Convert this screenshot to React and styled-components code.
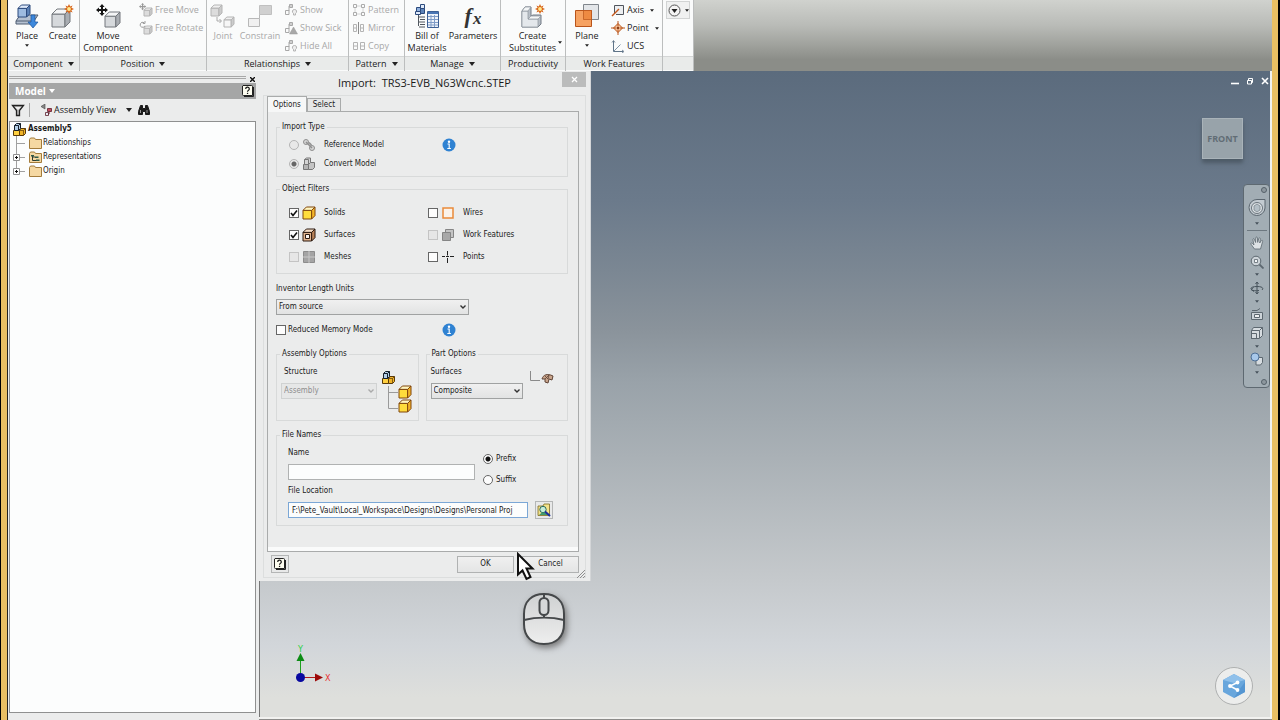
import { styled, createGlobalStyle } from "styled-components";

const GlobalStyle = createGlobalStyle`
  * {
    box-sizing: border-box;
  }
  body {
    margin: 0;
    overflow: hidden;
    background: #000;
    color: #1a1a1a;
    font-family: "DejaVu Sans Condensed", "DejaVu Sans", sans-serif;
    font-size: 8px;
    line-height: 12px;
  }
  button, input, select {
    font: inherit;
    color: inherit;
    margin: 0;
  }
  svg {
    display: block;
    flex-shrink: 0;
  }
`;

/* ---------- icons ---------- */

const Svg = ({ w = 16, h = w, box, children, ...rest }) => (
  <svg
    width={w}
    height={h}
    viewBox={box || `0 0 ${w} ${h}`}
    fill='none'
    aria-hidden='true'
    {...rest}
  >
    {children}
  </svg>
);

const Cube = ({ x = 0, y = 0, s = 14, front, top, side, line }) => {
  const d = s * 0.28;
  const f = s - d;
  return (
    <g stroke={line} strokeLinejoin='round' strokeWidth='1'>
      <path d={`M${x} ${y + d}h${f}v${f}h${-f}z`} fill={front} />
      <path d={`M${x} ${y + d}l${d} ${-d}h${f}l${-d} ${d}z`} fill={top} />
      <path d={`M${x + f} ${y + d}l${d} ${-d}v${f}l${-d} ${d}z`} fill={side} />
    </g>
  );
};

const yellow = { front: "#ffdc3c", top: "#fff6c0", side: "#f4b428", line: "#80460c" };
const grey = { front: "#d6d9dc", top: "#f4f5f6", side: "#a9adb2", line: "#73777c" };
const faint = { front: "#dcdcdc", top: "#f0f0f0", side: "#cccccc", line: "#b4b4b4" };
const blue = { front: "#9dbbe0", top: "#dfeafa", side: "#5d83b8", line: "#2c4a7c" };

const Burst = ({ x, y }) => (
  <g transform={`translate(${x} ${y})`}>
    <path
      d='M0-5L1.200-2.400 3.600-3.600 2.400-1.200 5 0 2.400 1.200 3.600 3.600 1.200 2.400 0 5-1.200 2.400-3.600 3.600-2.400 1.200-5 0-2.400-1.200-3.600-3.600-1.200-2.400z'
      fill='#d9661a'
    />
    <circle r='1.900' fill='#ffe98c' />
  </g>
);

const PlaceIcon = () => (
  <Svg w={26} h={26}>
    <path d='M2 18l4-6h18l-4 6v3H2z' fill='#b4c0d0' stroke='#4e5c70' />
    <path d='M2 18h15' stroke='#4e5c70' />
    <Cube x={4} y={2} s={12} {...blue} />
    <path d='M17 12h4v7h3l-5 6-5-6h3z' fill='#3d88dc' stroke='#1d559c' strokeWidth='.7' />
  </Svg>
);

const CreateIcon = () => (
  <Svg w={26} h={26}>
    <Cube x={2} y={6} s={18} {...grey} />
    <Burst x={19} y={6} />
  </Svg>
);

const MoveCross = ({ color = "#161616" }) => (
  <path
    d='M6 0l2.600 3H7v2h2V3.400L12 6 9 8.600V7H7v2h1.600L6 12 3.400 9H5V7H3v1.600L0 6l3-2.600V5h2V3H3.400z'
    fill={color}
  />
);

const MoveIcon = () => (
  <Svg w={26} h={26}>
    <Cube x={10} y={9} s={15} {...grey} />
    <g transform='translate(1 1)'>
      <MoveCross />
    </g>
  </Svg>
);

const FreeMoveIcon = () => (
  <Svg w={14}>
    <Cube x={5} y={5} s={8} {...faint} />
    <g transform='translate(0 0) scale(.6)'>
      <MoveCross color='#999' />
    </g>
  </Svg>
);

const FreeRotateIcon = () => (
  <Svg w={14}>
    <Cube x={5} y={5} s={8} {...faint} />
    <path d='M5 1.700a2.500 2.500 0 1 0 1 3M6 0v2.400H3.800' stroke='#999' />
  </Svg>
);

const JointIcon = () => (
  <Svg w={26} h={26}>
    <Cube x={1} y={2} s={11} {...faint} />
    <Cube x={14} y={14} s={10} {...faint} front='#f6f6f6' />
    <path d='M7 14v4h4M9.500 16l2 2-2 2' stroke='#aaa' />
  </Svg>
);

const ConstrainIcon = () => (
  <Svg w={26} h={26}>
    <path d='M12.500 2.500h12v9h-12z' fill='#d0d0d0' stroke='#c0c0c0' />
    <path d='M1.500 15.500h11v8h-11z' fill='#f0f0f0' stroke='#b8b8b8' />
    <path d='M12.500 11.500v4' stroke='#b8b8b8' />
  </Svg>
);

const RelIcon = ({ warn }) => (
  <Svg w={14}>
    <path d='M1.500 7.500h3.500v4H1.500zM5 8V3h3' stroke='#a8a8a8' />
    <path d='M5.500 1.500h3v3h-3z' fill='#d0d0d0' stroke='#a8a8a8' />
    {warn ? (
      <path d='M9.500 6l4 7h-8z' fill='#a8a8a8' stroke='#999' strokeWidth='.5' />
    ) : (
      <path d='M10.500 6.500a2 2 0 0 1 1 3.800V12H9.500v-1.700a2 2 0 0 1 1-3.800z' fill='#eee' stroke='#b4b4b4' />
    )}
  </Svg>
);

const PatternIcon = () => (
  <Svg w={14}>
    <g stroke='#acacac'>
      <path d='M1.500 1.500h3v3h-3zM9.500 1.500h3v3h-3zM1.500 9.500h3v3h-3zM9.500 9.500h3v3h-3z' />
      <path d='M4.500 3h5M4.500 11h5M3 4.500v5M11 4.500v5' strokeDasharray='1 1' />
    </g>
  </Svg>
);

const MirrorIcon = () => (
  <Svg w={14}>
    <g stroke='#b4b4b4'>
      <path d='M1.500 3.500h3v7h-3zM8.500 3.500h3v7h-3zM1.500 7h3M8.500 7h3' />
      <path d='M6.500 1v12' stroke='#8c8c8c' />
    </g>
  </Svg>
);

const CopyIcon = () => (
  <Svg w={14}>
    <path d='M1.500 3.500h4v7h-4zM8.500 3.500h4v7h-4zM1.500 7h4M8.500 7h4' stroke='#b4b4b4' />
  </Svg>
);

const BomIcon = () => (
  <Svg w={26} h={26}>
    <g stroke='#2c4a7c'>
      <path d='M2.500 4.500h4v4h-4z' fill='#8fb0dd' />
      <path d='M6.500 1.500h4v4h-4z' fill='#dfeafa' />
      <path d='M6.500 5.500h4v5h-4z' fill='#5d83b8' />
      <path d='M1.500 8.500h5v3h-5z' fill='#dfeafa' />
    </g>
    <path d='M4.500 12v11M5 14h6M6 16.500h5M5 19h6M6 21.500h5M5 24h6' stroke='#50565e' />
    <path d='M13.500 8.500h11v16h-11z' fill='#eef3fa' stroke='#3c5f94' />
    <path d='M14 9h10v2H14z' fill='#4a76b5' />
    <path d='M14 13.500h10M14 16.500h10M14 19.500h10M14 22h10M17 12v12M20.500 12v12' stroke='#7f9cc8' />
  </Svg>
);

const SubstituteIcon = () => (
  <Svg w={26} h={26}>
    <path d='M2 8l3-4h6v9l2-1h8v9l-3 3H2z' fill='#b8bfc7' stroke='#737b85' />
    <path d='M2 8h6v8h10v8H2z' fill='#e4e8ec' stroke='#8b939c' strokeWidth='.7' />
    <path d='M2 8l3-4h6L8 8zM8 16l3-3h10l-3 3z' fill='#f4f6f7' stroke='#8b939c' strokeWidth='.7' />
    <Burst x={20} y={6} />
  </Svg>
);

const PlaneIcon = () => (
  <Svg w={26} h={26}>
    <path d='M9.500 1.500h15v15h-15z' fill='#e3e6e9' stroke='#80868c' />
    <path d='M1.500 7.500h16v16h-16z' fill='#f6a262' stroke='#b9541a' />
    <path d='M9.500 7.500h8v9h-8z' fill='#ee8a42' stroke='#b9541a' strokeWidth='.7' />
  </Svg>
);

const AxisIcon = () => (
  <Svg w={14}>
    <path d='M3.500 10V2.500h9v9H5' fill='#eceef0' stroke='#50555c' />
    <path d='M1 13L8 6' stroke='#c4581c' strokeWidth='1.500' />
  </Svg>
);

const PointIcon = () => (
  <Svg w={14}>
    <path d='M7 2.500L11.500 7 7 11.500 2.500 7z' fill='#f7c49c' stroke='#b9541a' />
    <path d='M7 0v5M7 9v5M0 7h5M9 7h5' stroke='#b9541a' />
    <path d='M7 5.300L8.700 7 7 8.700 5.300 7z' fill='#8c3a10' />
  </Svg>
);

const UcsIcon = () => (
  <Svg w={14}>
    <path d='M2.500 2v10.500H12' stroke='#5f7488' />
    <path d='M2.500 12.500l7-7' stroke='#7f93a6' />
    <path d='M1 3.500l1.500-2L4 3.500M11 11l2 1.500-2 1.500' stroke='#5f7488' strokeWidth='.8' />
  </Svg>
);

const RibbonMenuIcon = () => (
  <Svg w={13}>
    <circle cx='6.500' cy='6.500' r='5.500' fill='#f4f4f4' stroke='#555' />
    <path d='M3.500 5h6l-3 4z' fill='#222' />
  </Svg>
);

const Caret = ({ w = 6, color = "#222" }) => (
  <Svg w={w} h={w === 6 ? 4 : 3} box='0 0 6 4'>
    <path d='M0 0h6L3 4z' fill={color} />
  </Svg>
);

const HelpIcon = ({ size = 12 }) => (
  <Svg w={size} box='0 0 12 12'>
    <path d='M2 11.500h9.500V2' stroke='#222' />
    <path d='M1 .500h8.500a1 1 0 0 1 1 1V10.500H1.500a1 1 0 0 1-1-1V1z' fill='#fdfdf0' stroke='#222' />
    <path d='M3.700 4a1.800 1.800 0 1 1 2.600 1.500c-.6.3-.8.6-.8 1.200' stroke='#161616' strokeWidth='1.200' />
    <path d='M4.900 7.800h1.300v1.200H4.900z' fill='#161616' />
  </Svg>
);

const FilterIcon = () => (
  <Svg w={14}>
    <path d='M1.500 2.500h11L8.500 7.500v5h-3v-5z' fill='#b8b8b8' stroke='#222' strokeWidth='1.300' />
    <path d='M4 4h6L7 7z' fill='#f0f0f0' />
  </Svg>
);

const ViewIcon = () => (
  <Svg w={12}>
    <path d='M5 0L1 2.500 5 5z' fill='#888' stroke='#444' strokeWidth='.6' />
    <path d='M7.500 4.500h4v3h-4z' fill='#c44a5c' stroke='#5c1f2c' strokeWidth='.8' />
    <path d='M5.500 8.500h3v3h-3z' fill='#e8eaf0' stroke='#5c1f2c' strokeWidth='.8' />
    <path d='M9 7.500V10H8' stroke='#5c1f2c' />
  </Svg>
);

const FindIcon = () => (
  <Svg w={12}>
    <path d='M2.500 1.500h2v3h3v-3h2l2 6v3h-4v-3h-3v3h-4v-3z' fill='#1a1a1a' stroke='#1a1a1a' />
    <path d='M2.500 6v3M9 6v3' stroke='#ccc' strokeWidth='.7' />
  </Svg>
);

const AssemblyShape = () => (
  <>
    <path d='M.500 7.500h6v5h-6z' fill='#ffd040' stroke='#5a3a08' />
    <path d='M6.500 7.500l1.500-2h4.500v5l-2 2h-4z' fill='#f0b428' stroke='#5a3a08' />
    <path d='M6.500 7.500h4l2-2M10.500 7.500v5' stroke='#5a3a08' strokeWidth='.7' />
    <path d='M1.500 2.500l2-2h4v5l-2 2h-4z' fill='#b4cfe8' stroke='#16202c' />
    <path d='M1.500 2.500h4v5M5.500 2.500l2-2' stroke='#16202c' />
  </>
);

const AssemblyIcon = () => (
  <Svg w={13}>
    <AssemblyShape />
  </Svg>
);

const FolderIcon = ({ rep }) => (
  <Svg w={13} h={12}>
    <path d='M.500 2.500l1-1.500h4l1 1.500h6v9H.500z' fill='#f5d8a2' stroke='#a37c3c' />
    {rep && (
      <>
        <path d='M3.500 4v5.500H7M3.500 6H6' stroke='#2e3a30' />
        <path d='M2 4h3v1.500H2zM6 5.500h3.500V7H6zM7 8.500h3.500V10H7z' fill='#2f5a48' />
      </>
    )}
  </Svg>
);

const InfoIcon = () => (
  <Svg w={14}>
    <circle cx='7' cy='7' r='6.500' fill='#2f82d2' />
    <circle cx='7' cy='3.700' r='1.200' fill='#fff' />
    <path d='M5.500 6h1.700v4.500M5.300 10.500h3.600' stroke='#fff' strokeWidth='1.100' />
  </Svg>
);

const LinkIcon = () => (
  <Svg w={14}>
    <g stroke='#8f8f8f'>
      <circle cx='4' cy='4' r='2.500' fill='#d4d4d4' />
      <circle cx='10' cy='10' r='2.500' fill='#d4d4d4' />
      <path d='M4 4l6 6M7 4.500L9.500 7' strokeWidth='1.500' />
    </g>
  </Svg>
);

const ConvertIcon = () => (
  <Svg w={14}>
    <g stroke='#777'>
      <path d='M1.500 7.500h5v5h-5z' fill='#b4b4b4' />
      <path d='M6.500 7.500l2-2h4v5l-2 2h-4z' fill='#c4c4c4' />
      <path d='M2.500 2.500l2-1.500h4v4.500l-2 2h-4z' fill='#d4d4d4' />
      <path d='M2.500 2.500h4v5' />
    </g>
  </Svg>
);

const SolidIcon = () => (
  <Svg w={14}>
    <Cube x={1} y={1} s={12} {...yellow} />
  </Svg>
);

const SurfaceIcon = () => (
  <Svg w={14}>
    <Cube x={1} y={1} s={12} front='#e2b48e' top='#f4dcc4' side='#b98258' line='#2c1a10' />
    <path d='M3.500 6.500h4v4h-4z' fill='#fbf4ee' stroke='#2c1a10' />
  </Svg>
);

const MeshIcon = () => (
  <Svg w={14}>
    <path d='M1.500 1.500h11v11h-11z' fill='#a4a4a4' stroke='#8c8c8c' />
    <path d='M7 1v12M1 7h12' stroke='#c8c8c8' />
  </Svg>
);

const WireIcon = () => (
  <Svg w={14}>
    <path d='M2 2h10v10H2z' stroke='#ea8a3a' strokeWidth='1.500' fill='#fbf3ea' />
  </Svg>
);

const WorkIcon = () => (
  <Svg w={14}>
    <path d='M4.500 1.500h8v8h-8z' fill='#c4c4c4' stroke='#858585' />
    <path d='M1.500 4.500h8v8h-8z' fill='#a8a8a8' stroke='#858585' />
  </Svg>
);

const PointsIcon = () => (
  <Svg w={14}>
    <path d='M6.500 1v4.500M6.500 8v5M1 6.500h3M9 6.500h4M5 6.500h3' stroke='#222' />
  </Svg>
);

const StructureIcon = () => (
  <Svg w={32} h={48}>
    <g transform='translate(1 5)'>
      <AssemblyShape />
    </g>
    <path d='M7.500 20v22.500H17M7.500 26.500H17' stroke='#9a9a9a' />
    <Cube x={18} y={20} s={12} {...yellow} />
    <Cube x={18} y={34} s={12} {...yellow} />
  </Svg>
);

const CompositeIcon = () => (
  <Svg w={24} h={20}>
    <path d='M.500 5v9.500H10' stroke='#8a8a8a' />
    <path d='M12 13c1-4 5-6 11-3l-1 4-3-1-1 4-3-1v-3z' fill='#c9a58c' stroke='#5f4436' />
    <path d='M15 10l3 3M19 9l-1 4M15 13l4-4' stroke='#5f4436' strokeWidth='.8' />
  </Svg>
);

const BrowseIcon = () => (
  <Svg w={14}>
    <path d='M1 3h5l1-2h5.500v11.500H1z' fill='#f3e28a' stroke='#7c6a20' strokeWidth='.8' />
    <circle cx='6' cy='6.500' r='3.200' fill='#c4ecd8' stroke='#2b6a5c' />
    <path d='M2 12l3-2.500h4l2 2.500z' fill='#3f9a6c' />
    <path d='M8 8.500l5 4.500' stroke='#1c2f9c' strokeWidth='2' />
  </Svg>
);

const Chevron = ({ color = "#333" }) => (
  <Svg w={8} h={6}>
    <path d='M1.500 1.500L4 4l2.500-2.500' stroke={color} strokeWidth='1.400' />
  </Svg>
);

const WheelIcon = () => (
  <Svg w={20}>
    <path d='M10 1.500h8v8.500a8 8 0 1 1-8-8.500z' fill='#c3cbd1' stroke='#5b666f' />
    <circle cx='10' cy='10' r='5.500' fill='#dfe4e7' stroke='#6b757d' />
    <path d='M7 8l3-2 3 2v4l-3 2-3-2z' fill='#b4bfc6' stroke='#7b858d' strokeWidth='.8' />
  </Svg>
);

const PanIcon = () => (
  <Svg w={14}>
    <path
      d='M4.500 13L1 8.200c-.6-1 .6-1.600 1.300-.9L4 9 2.900 3.700c-.2-1.100 1.200-1.400 1.500-.3L5.600 6.500 5.800 1.900c0-1.200 1.500-1.200 1.600 0l.3 4.500 1.100-3.900c.3-1.100 1.700-.8 1.500.3L9.700 7l1.600-2.300c.6-.9 1.800-.3 1.300.8L10.500 13z'
      fill='#dde2e5'
      stroke='#5d6870'
      strokeWidth='.8'
    />
  </Svg>
);

const ZoomIcon = () => (
  <Svg w={14}>
    <circle cx='6' cy='6' r='4.800' fill='#cdd4d9' stroke='#5d6870' />
    <path d='M4.500 4.500h3v3h-3z' fill='#f4f6f7' stroke='#5d6870' strokeWidth='.8' />
    <path d='M9.500 9.500l4 4' stroke='#5d6870' strokeWidth='1.800' />
  </Svg>
);

const OrbitIcon = () => (
  <Svg w={14}>
    <path d='M7 1v12M5.500 3L7 1l1.500 2M5.500 11L7 13l1.500-2' stroke='#46525b' />
    <path d='M12 9c2-2 0-3.500-5-3.500S0 7 1.500 8.500 6 10 9 9.500M3.500 6.500L1 8.500l3 2' stroke='#46525b' />
  </Svg>
);

const LookIcon = () => (
  <Svg w={14}>
    <path d='M1.500 5.500h11v7h-11z' fill='#cdd4d9' stroke='#5d6870' />
    <path d='M4.500 7.500h5v3h-5z' fill='#eef0f1' stroke='#5d6870' />
    <path d='M2 3.500h5l3-2' stroke='#5d6870' />
  </Svg>
);

const HomeCubeIcon = () => (
  <Svg w={14}>
    <path d='M1.500 4.500l2-3h9v8l-3 3h-8z' fill='#d6dce0' stroke='#5d6870' />
    <path d='M1.500 7.500h5v5h-5zM9.500 12V4.500h-8M9.500 4.500l3-3' stroke='#5d6870' />
  </Svg>
);

const StyleIcon = () => (
  <Svg w={14}>
    <path d='M6 5.500h6.500v5l-2 2.500H6z' fill='#d6dce0' stroke='#5d6870' />
    <circle cx='5' cy='5' r='4' fill='#a8c8ea' stroke='#4f7096' />
  </Svg>
);

/* ---------- data ---------- */

const panels = [
  {
    title: "Component",
    width: 72,
    arrow: true,
    tools: [
      { label: "Place", icon: <PlaceIcon />, width: 38, menu: true },
      { label: "Create", icon: <CreateIcon />, width: 33 },
    ],
  },
  {
    title: "Position",
    width: 127,
    arrow: true,
    tools: [{ label: "Move Component", icon: <MoveIcon />, width: 56 }],
    rows: [
      { label: "Free Move", icon: <FreeMoveIcon /> },
      { label: "Free Rotate", icon: <FreeRotateIcon /> },
    ],
    disabled: true,
  },
  {
    title: "Relationships",
    width: 142,
    arrow: true,
    tools: [
      { label: "Joint", icon: <JointIcon />, width: 32, disabled: true },
      { label: "Constrain", icon: <ConstrainIcon />, width: 42, disabled: true },
    ],
    rows: [
      { label: "Show", icon: <RelIcon /> },
      { label: "Show Sick", icon: <RelIcon warn /> },
      { label: "Hide All", icon: <RelIcon /> },
    ],
    disabled: true,
  },
  {
    title: "Pattern",
    width: 56,
    arrow: true,
    tools: [],
    rows: [
      { label: "Pattern", icon: <PatternIcon /> },
      { label: "Mirror", icon: <MirrorIcon /> },
      { label: "Copy", icon: <CopyIcon /> },
    ],
    disabled: true,
  },
  {
    title: "Manage",
    width: 96,
    arrow: true,
    tools: [
      { label: "Bill of Materials", icon: <BomIcon />, width: 44 },
      { label: "Parameters", fx: true, width: 48 },
    ],
  },
  {
    title: "Productivity",
    width: 65,
    tools: [
      { label: "Create Substitutes", icon: <SubstituteIcon />, width: 63, side: true },
    ],
  },
  {
    title: "Work Features",
    width: 97,
    tools: [{ label: "Plane", icon: <PlaneIcon />, width: 42, menu: true }],
    rows: [
      { label: "Axis", icon: <AxisIcon />, menu: true },
      { label: "Point", icon: <PointIcon />, menu: true },
      { label: "UCS", icon: <UcsIcon /> },
    ],
  },
];

const filters = [
  { label: "Solids", icon: <SolidIcon />, checked: true },
  { label: "Wires", icon: <WireIcon /> },
  { label: "Surfaces", icon: <SurfaceIcon />, checked: true },
  { label: "Work Features", icon: <WorkIcon />, disabled: true },
  { label: "Meshes", icon: <MeshIcon />, disabled: true },
  { label: "Points", icon: <PointsIcon /> },
];

/* ---------- parts ---------- */

const Ribbon = () => (
  <RibbonBar>
    {panels.map(({ title, width, arrow, tools, rows, disabled }) => (
      <Panel key={title} $width={width}>
        <PanelBody>
          {tools.map((tool) => (
            <Tool key={tool.label} $width={tool.width} disabled={tool.disabled}>
              {tool.fx ? (
                <Fx aria-hidden='true'>
                  <b>f</b>
                  <small>x</small>
                </Fx>
              ) : (
                tool.icon
              )}
              <span>{tool.label}</span>
              {tool.menu && <Caret w={4} />}
              {tool.side && (
                <SideCaret>
                  <Caret w={4} />
                </SideCaret>
              )}
            </Tool>
          ))}
          {rows && (
            <ToolRows>
              {rows.map((row) => (
                <ToolRow key={row.label} disabled={disabled}>
                  {row.icon}
                  <span>{row.label}</span>
                  {row.menu && <Caret w={4} />}
                </ToolRow>
              ))}
            </ToolRows>
          )}
        </PanelBody>
        <PanelTitle>
          {title}
          {arrow && <Caret />}
        </PanelTitle>
      </Panel>
    ))}
    <Panel $width={31}>
      <PanelBody>
        <RibbonMenu aria-label='Ribbon display'>
          <RibbonMenuIcon />
          <Caret w={4} />
        </RibbonMenu>
      </PanelBody>
      <PanelTitle />
    </Panel>
  </RibbonBar>
);

const Browser = () => (
  <Side>
    <Grip>
      <i />
      <CloseMark aria-label='Close browser'>
        <Svg w={5}>
          <path d='M0 0l5 5M5 0L0 5' stroke='#111' strokeWidth='1.400' />
        </Svg>
      </CloseMark>
    </Grip>
    <ModelBar>
      <strong>Model</strong>
      <Caret color='#fff' />
      <IconButton aria-label='Help'>
        <HelpIcon />
      </IconButton>
    </ModelBar>
    <SideTools>
      <IconButton aria-label='Filter'>
        <FilterIcon />
      </IconButton>
      <Divider />
      <ViewButton>
        <ViewIcon />
        <span>Assembly View</span>
        <Caret />
      </ViewButton>
      <IconButton aria-label='Find'>
        <FindIcon />
      </IconButton>
    </SideTools>
    <Tree>
      <TreeRoot>
        <AssemblyIcon />
        Assembly5
      </TreeRoot>
      <TreeItem>
        <Branch />
        <FolderIcon />
        Relationships
      </TreeItem>
      <TreeItem>
        <Branch plus />
        <FolderIcon rep />
        Representations
      </TreeItem>
      <TreeItem>
        <Branch plus last />
        <FolderIcon />
        Origin
      </TreeItem>
    </Tree>
  </Side>
);

const Branch = ({ plus, last }) => (
  <Svg w={15} h={14}>
    <path d={last ? "M3.500 0v7.500H12" : "M3.500 0v14M3.500 7.500H12"} stroke='#a0a0a0' />
    {plus && (
      <>
        <path d='M.500 4.500h6v6h-6z' fill='#fff' stroke='#909090' />
        <path d='M2 7.500h3M3.500 6v3' stroke='#111' />
      </>
    )}
  </Svg>
);

const Drop = ({ id, value, width, disabled }) => (
  <SelectBox $width={width} $disabled={disabled}>
    <select id={id} disabled={disabled} defaultValue={value}>
      <option>{value}</option>
    </select>
    <Chevron color={disabled ? "#aaa" : "#333"} />
  </SelectBox>
);

const ImportDialog = () => (
  <Dialog role='dialog' aria-labelledby='dialog-title'>
    <TitleBar>
      <h1 id='dialog-title'>Import:&nbsp; TRS3-EVB_N63Wcnc.STEP</h1>
      <CloseButton aria-label='Close'>
        <Svg w={7}>
          <path d='M1 1l5 5M6 1L1 6' stroke='#fff' strokeWidth='1.300' />
        </Svg>
      </CloseButton>
    </TitleBar>
    <Client>
      <Tabs role='tablist'>
        <Tab role='tab' aria-selected='true' $active>
          Options
        </Tab>
        <Tab role='tab' aria-selected='false'>
          Select
        </Tab>
      </Tabs>
      <Sheet>
        <Group>
          <legend>Import Type</legend>
          <TypeRows>
            <TypeRow>
              <Option>
                <Radio name='type' disabled />
                <LinkIcon />
                <OptionText>Reference Model</OptionText>
              </Option>
              <InfoIcon />
            </TypeRow>
            <TypeRow>
              <Option>
                <Radio name='type' disabled defaultChecked />
                <ConvertIcon />
                <OptionText>Convert Model</OptionText>
              </Option>
            </TypeRow>
          </TypeRows>
        </Group>

        <Group>
          <legend>Object Filters</legend>
          <FilterGrid>
            {filters.map(({ label, icon, checked, disabled }) => (
              <Option key={label}>
                <Check defaultChecked={checked} disabled={disabled} />
                {icon}
                <OptionText>{label}</OptionText>
              </Option>
            ))}
          </FilterGrid>
        </Group>

        <Units>
          <label htmlFor='units'>Inventor Length Units</label>
          <Drop id='units' value='From source' width={193} />
          <TypeRow $wide>
            <Option>
              <Check />
              <span>Reduced Memory Mode</span>
            </Option>
            <InfoIcon />
          </TypeRow>
        </Units>

        <Pair>
          <Group>
            <legend>Assembly Options</legend>
            <OptionPane>
              <Stack>
                <PaneLabel htmlFor='structure'>Structure</PaneLabel>
                <Drop id='structure' value='Assembly' width={96} disabled />
              </Stack>
              <StructureIcon />
            </OptionPane>
          </Group>
          <Group>
            <legend>Part Options</legend>
            <OptionPane $loose>
              <Stack>
                <label htmlFor='surfaces'>Surfaces</label>
                <Drop id='surfaces' value='Composite' width={92} />
              </Stack>
              <CompositeIcon />
            </OptionPane>
          </Group>
        </Pair>

        <Group>
          <legend>File Names</legend>
          <NamePane>
            <NameRow>
              <Stack>
                <label htmlFor='name'>Name</label>
                <TextBox id='name' />
                <label htmlFor='location'>File Location</label>
              </Stack>
              <Affixes>
                <Option>
                  <Radio name='affix' defaultChecked />
                  Prefix
                </Option>
                <Option>
                  <Radio name='affix' />
                  Suffix
                </Option>
              </Affixes>
            </NameRow>
            <LocationRow>
              <TextBox
                id='location'
                $focused
                defaultValue='F:\Pete_Vault\Local_Workspace\Designs\Designs\Personal Proj'
              />
              <SquareButton aria-label='Browse'>
                <BrowseIcon />
              </SquareButton>
            </LocationRow>
          </NamePane>
        </Group>
      </Sheet>
      <Footer>
        <SquareButton aria-label='Help'>
          <HelpIcon />
        </SquareButton>
        <Spacer />
        <PushButton>OK</PushButton>
        <PushButton>Cancel</PushButton>
      </Footer>
    </Client>
    <Resize>
      <Svg w={10}>
        <path d='M1 9l8-8M4 9l5-5M7 9l2-2' stroke='#8e8e8e' />
      </Svg>
    </Resize>
  </Dialog>
);

const Viewport = () => (
  <Canvas>
    <WindowButtons>
      <button aria-label='Minimize'>
        <Svg w={8}>
          <path d='M0 6.500h8' stroke='#fff' strokeWidth='1.600' />
        </Svg>
      </button>
      <button aria-label='Restore'>
        <Svg w={8}>
          <path d='M2.500 3V1.500h4v4H5.500M1.500 3.500h4v3.500h-4z' stroke='#fff' />
        </Svg>
      </button>
      <button aria-label='Close document'>
        <Svg w={8}>
          <path d='M1 1l6 6M7 1L1 7' stroke='#fff' strokeWidth='1.600' />
        </Svg>
      </button>
    </WindowButtons>
    <ViewCube>FRONT</ViewCube>
    <NavBar>
      <NavDot />
      <WheelIcon />
      <Caret w={4} color='#46525b' />
      <hr />
      <PanIcon />
      <ZoomIcon />
      <Caret w={4} color='#46525b' />
      <OrbitIcon />
      <Caret w={4} color='#46525b' />
      <LookIcon />
      <HomeCubeIcon />
      <Caret w={4} color='#46525b' />
      <StyleIcon />
      <Caret w={4} color='#46525b' />
      <NavDot />
    </NavBar>
    <Triad>
      <Svg w={44} h={48}>
        <path d='M8.500 38V21' stroke='#1ea01e' />
        <path d='M8.500 15l4 8h-8z' fill='#0c8c14' />
        <path d='M9 39.500h18' stroke='#b01818' />
        <path d='M23 35.500l8 4-8 4z' fill='#9c0808' />
        <circle cx='8.500' cy='39.500' r='4.500' fill='#0808a0' />
        <text x='6' y='14' fontSize='9' fill='#28d040'>Y</text>
        <text x='33' y='43' fontSize='9' fill='#e83030'>X</text>
      </Svg>
    </Triad>
    <ShareButton aria-label='Share'>
      <Svg w={24} h={26}>
        <path d='M12 1l11 6v12l-11 6-11-6V7z' fill='#68a6dc' />
        <path d='M12 1l11 6-11 3L1 7z' fill='#8fc0ea' />
        <path d='M12 25l11-6V9l-6 8z' fill='#5596d2' />
        <path d='M15.500 9.500L8 13l7.500 4' stroke='#fff' strokeWidth='1.500' />
        <circle cx='15.500' cy='9.500' r='1.900' fill='#fff' />
        <circle cx='8' cy='13' r='1.900' fill='#fff' />
        <circle cx='15.500' cy='17' r='1.900' fill='#fff' />
      </Svg>
    </ShareButton>
  </Canvas>
);

const App = () => (
  <Frame>
    <GlobalStyle />
    <Ribbon />
    <Workspace>
      <Browser />
      <Viewport />
      <ImportDialog />
      <MouseHint>
        <Svg w={50} h={60}>
          <defs>
            <linearGradient id='mouse' x1='0' y1='0' x2='0' y2='1'>
              <stop offset='0' stopColor='#cfd1d2' />
              <stop offset='1' stopColor='#eeeeee' />
            </linearGradient>
          </defs>
          <path
            d='M3 24C3 11 11 4 23 4s20 7 20 20v10c0 13-8 20-20 20S3 47 3 34z'
            fill='url(#mouse)'
            stroke='#45484a'
            strokeWidth='2'
          />
          <path d='M3 30c12-3 28-3 40 0' stroke='#45484a' strokeWidth='2' />
          <path d='M23 4v4M23 25v3' stroke='#45484a' strokeWidth='2' />
          <rect x='18.500' y='8' width='9' height='17' rx='4.500' stroke='#45484a' strokeWidth='2' fill='#d6d8d9' />
        </Svg>
      </MouseHint>
      <Cursor>
        <Svg w={20} h={30}>
          <path
            d='M2 2v20.500l4.500-4 4 8.500 4-2-4-8.500H16.500z'
            fill='#fff'
            stroke='#111'
            strokeWidth='2'
          />
        </Svg>
      </Cursor>
    </Workspace>
  </Frame>
);

/* ---------- styles ---------- */

const uiFont = `"Open Sans", "Noto Sans", sans-serif`;

const Frame = styled.div`
  height: 100vh;
  display: flex;
  flex-direction: column;
  border: solid #e9bf63;
  border-width: 0 6px;
  margin: 0 2px 0 1px;
  background: #ebecec;
`;

const RibbonBar = styled.header`
  display: flex;
  height: 71px;
  font-family: ${uiFont};
  font-size: 9px;
  border-left: 1px solid #222;
  background: linear-gradient(#d0d2ce, #b9bbb7 36%, #9fa19c 64%, #8b8d88 84%, #8b8d88);
`;

const Panel = styled.section`
  width: ${({ $width }) => $width}px;
  padding-bottom: 1px;
  display: flex;
  flex-direction: column;
  background: #fafbfb;
  border-right: 1px solid #bcbebe;
`;

const PanelBody = styled.div`
  flex: 1;
  display: flex;
  align-items: flex-start;
`;

const PanelTitle = styled.div`
  height: 14px;
  display: flex;
  align-items: center;
  justify-content: center;
  gap: 5px;
  background: #e9ebea;
  border-top: 1px solid #d4d6d6;
  white-space: nowrap;
`;

const Tool = styled.button`
  position: relative;
  width: ${({ $width }) => $width}px;
  padding: 3px 0 0;
  display: flex;
  flex-direction: column;
  align-items: center;
  border: 0;
  background: none;
  line-height: 12px;
  color: ${({ disabled }) => (disabled ? "#a8a8a8" : "#222")};
  > span {
    margin-top: 1px;
  }
  > span + svg {
    margin-top: 2px;
  }
`;

const SideCaret = styled.span`
  position: absolute;
  right: 2px;
  bottom: 10px;
`;

const Fx = styled.i`
  height: 26px;
  display: flex;
  align-items: flex-end;
  gap: 1px;
  font-family: "Liberation Serif", serif;
  color: #333;
  b {
    font-size: 22px;
    line-height: 26px;
  }
  small {
    font-size: 17px;
    font-weight: bold;
    line-height: 20px;
  }
`;

const ToolRows = styled.div`
  padding: 1px 0 0 1px;
`;

const ToolRow = styled.button`
  height: 18px;
  padding: 0 0 0 2px;
  display: flex;
  align-items: center;
  gap: 2px;
  border: 0;
  background: none;
  white-space: nowrap;
  color: ${({ disabled }) => (disabled ? "#a8a8a8" : "#222")};
  span + svg {
    margin-left: 4px;
  }
`;

const RibbonMenu = styled.button`
  margin: 1px 3px;
  width: 26px;
  height: 18px;
  padding: 0;
  display: flex;
  align-items: center;
  justify-content: center;
  gap: 4px;
  border: 1px solid #d2d4d4;
  background: #f0f1f1;
`;

const Workspace = styled.main`
  flex: 1;
  min-height: 0;
  display: flex;
  position: relative;
`;

const Side = styled.aside`
  width: 252px;
  padding: 4px 3px 7px 1px;
  display: flex;
  flex-direction: column;
  border-left: 1px solid #222;
  background: #ebecec;
`;

const Grip = styled.div`
  height: 8px;
  display: flex;
  gap: 4px;
  i {
    flex: 1;
    height: 3px;
    margin-top: 1px;
    border: solid #a8a8a8;
    border-width: 1px 0;
  }
`;

const CloseMark = styled.button`
  width: 6px;
  padding: 0;
  border: 0;
  background: none;
`;

const ModelBar = styled.div`
  height: 16px;
  padding: 0 2px 0 6px;
  display: flex;
  align-items: center;
  gap: 3px;
  background: #a5a6a6;
  color: #fff;
  font-family: ${uiFont};
  font-size: 10px;
  button {
    margin-left: auto;
  }
`;

const IconButton = styled.button`
  padding: 0;
  border: 0;
  background: none;
`;

const SideTools = styled.div`
  height: 22px;
  padding: 0 2px;
  display: flex;
  align-items: center;
  gap: 4px;
`;

const Divider = styled.span`
  width: 1px;
  height: 14px;
  background: #a8a8a8;
`;

const ViewButton = styled.button`
  padding: 0 0 0 6px;
  display: flex;
  align-items: center;
  gap: 2px;
  border: 0;
  background: none;
  font-family: ${uiFont};
  font-size: 9px;
  svg:last-child {
    margin: 0 2px 0 8px;
  }
`;

const Tree = styled.ul`
  flex: 1;
  margin: 0;
  padding: 0 3px;
  list-style: none;
  border: 1px solid #8f9090;
  background: #fcfdfd;
`;

const TreeItem = styled.li`
  height: 14px;
  display: flex;
  align-items: center;
  gap: 1px;
`;

const TreeRoot = styled(TreeItem)`
  gap: 2px;
  font-weight: bold;
`;

const Canvas = styled.section`
  flex: 1;
  position: relative;
  margin-bottom: 1px;
  border: solid #f2f2f0;
  border-width: 0 2px 2px 0;
  box-shadow: inset 1px 0 #777, 0 1px #8c8c8a;
  background: linear-gradient(
    #5b6b7d,
    #6b7a8b 20%,
    #7b8793 31%,
    #8a939b 40%,
    #99a2a9 48%,
    #aab1b6 60%,
    #c4c8cb 78%,
    #d2d6da 89%,
    #dedfdc 97%
  );
`;

const WindowButtons = styled.div`
  position: absolute;
  top: 6px;
  right: 1px;
  display: flex;
  gap: 7px;
  button {
    padding: 0;
    border: 0;
    background: none;
  }
`;

const ViewCube = styled.div`
  position: absolute;
  top: 47px;
  right: 27px;
  width: 41px;
  height: 41px;
  display: flex;
  align-items: center;
  justify-content: center;
  border: 1px solid #a9b3b9;
  background: #98a3aa;
  box-shadow: 0 4px 4px #4d5a66;
  color: #626d75;
  font: bold 9px/12px "Open Sans", sans-serif;
`;

const NavBar = styled.nav`
  position: absolute;
  top: 113px;
  right: 0;
  width: 27px;
  height: 204px;
  padding: 2px;
  display: flex;
  flex-direction: column;
  align-items: center;
  justify-content: space-between;
  border: 1px solid #5e6971;
  border-radius: 4px;
  background: #a2adb4;
  hr {
    width: 20px;
    margin: 0;
    border: 0;
    border-top: 1px solid #6d7880;
  }
`;

const NavDot = styled.span`
  width: 6px;
  height: 6px;
  align-self: flex-end;
  border: 1px solid #56616a;
  border-radius: 50%;
  background: #8d979e;
`;

const Triad = styled.div`
  position: absolute;
  left: 33px;
  bottom: 31px;
`;

const ShareButton = styled.button`
  position: absolute;
  right: 17px;
  bottom: 12px;
  width: 38px;
  height: 38px;
  padding: 0;
  display: flex;
  align-items: center;
  justify-content: center;
  border: 1px solid #aeb0b0;
  border-radius: 50%;
  background: #ecedec;
`;

const Dialog = styled.div`
  position: absolute;
  top: 0;
  left: 251px;
  width: 333px;
  padding: 0 4px 3px 5px;
  background: #ebecec;
  border-right: 1px solid #d4d6d8;
`;

const TitleBar = styled.div`
  height: 24px;
  padding-left: 24px;
  display: flex;
  align-items: flex-start;
  h1 {
    flex: 1;
    margin: 0;
    font: 11px/24px ${uiFont};
    text-align: center;
  }
`;

const CloseButton = styled.button`
  width: 24px;
  height: 15px;
  margin-top: 1px;
  padding: 0;
  display: flex;
  align-items: center;
  justify-content: center;
  border: 0;
  background: #bbbcbc;
`;

const Client = styled.div`
  padding: 0 6px 4px 3px;
  border: 1px solid #dcdede;
`;

const Tabs = styled.div`
  display: flex;
  align-items: flex-end;
  height: 15px;
`;

const Tab = styled.button`
  position: relative;
  z-index: 1;
  height: ${({ $active }) => ($active ? 16 : 13)}px;
  margin-bottom: ${({ $active }) => ($active ? -1 : 0)}px;
  padding: 0 5px;
  border: 1px solid #a9abab;
  border-bottom: 0;
  background: ${({ $active }) => ($active ? "#f6f7f7" : "#e6e7e7")};
`;

const Sheet = styled.div`
  padding: 9px 10px 25px 8px;
  border: 1px solid #a9abab;
  box-shadow: inset 0 -4px #fafbfb;
`;

const Group = styled.fieldset`
  min-width: 0;
  margin: 0;
  padding: 0;
  border: 1px solid #d8dada;
  legend {
    height: 12px;
    margin-left: 3px;
    padding: 0 2px;
  }
  & + & {
    margin-top: 6px;
  }
`;

const TypeRows = styled.div`
  padding: 6px 12px;
  display: grid;
  gap: 7px;
`;

const TypeRow = styled.div`
  height: ${({ $wide }) => ($wide ? 14 : 12)}px;
  display: flex;
  align-items: center;
  label {
    width: ${({ $wide }) => ($wide ? 166 : 153)}px;
  }
`;

const Option = styled.label`
  display: flex;
  align-items: center;
  gap: 3px;
  white-space: nowrap;
`;

const OptionText = styled.span`
  padding-left: 5px;
`;

const Radio = styled.input.attrs({ type: "radio" })`
  appearance: none;
  width: 10px;
  height: 10px;
  border: 1px solid #666;
  border-radius: 50%;
  background: #fdfdfd;
  &:checked {
    background: radial-gradient(#111 0 2px, #fdfdfd 3px);
  }
  &:disabled {
    border-color: #b4b4b4;
    background: #e8e8e8;
  }
  &:disabled:checked {
    background: radial-gradient(#666 0 2px, #e8e8e8 3px);
  }
`;

const CheckFrame = styled.span`
  display: grid;
  width: 10px;
  height: 10px;
  > * {
    grid-area: 1 / 1;
  }
  input {
    appearance: none;
    width: 10px;
    height: 10px;
    border: 1px solid #666;
    background: #fdfdfd;
  }
  input:disabled {
    border-color: #c4c4c4;
    background: #e6e6e6;
  }
  svg {
    visibility: hidden;
    pointer-events: none;
  }
  input:checked + svg {
    visibility: visible;
  }
`;

const Check = (props) => (
  <CheckFrame>
    <input type='checkbox' {...props} />
    <Svg w={10}>
      <path d='M2 5l2 2.500L8 2.500' stroke='#111' strokeWidth='1.600' />
    </Svg>
  </CheckFrame>
);

const FilterGrid = styled.div`
  padding: 7px 12px 5px;
  display: grid;
  grid-template-columns: 139px 1fr;
  grid-auto-rows: 22px;
`;

const Units = styled.div`
  margin: 9px 0 11px;
  display: flex;
  flex-direction: column;
  gap: 4px;
  ${TypeRow} {
    margin-top: 4px;
  }
  ${Option} {
    gap: 2px;
  }
`;

const SelectBox = styled.div`
  position: relative;
  width: ${({ $width }) => $width}px;
  height: 16px;
  select {
    appearance: none;
    width: 100%;
    height: 16px;
    padding: 0 14px 0 2px;
    border: 1px solid ${({ $disabled }) => ($disabled ? "#d0d2d2" : "#a0a2a2")};
    border-radius: 0;
    background: ${({ $disabled }) =>
      $disabled ? "#e6e7e7" : "linear-gradient(#f0f0f0, #e2e3e3)"};
    color: ${({ $disabled }) => ($disabled ? "#8e8e8e" : "#1a1a1a")};
    opacity: 1;
  }
  svg {
    position: absolute;
    right: 2px;
    top: 5px;
    pointer-events: none;
  }
`;

const Pair = styled.div`
  margin-bottom: 8px;
  display: grid;
  grid-template-columns: 1fr 1fr;
  gap: 7px;
  ${Group} {
    margin: 0;
  }
`;

const OptionPane = styled.div`
  height: 60px;
  padding: 6px 4px;
  display: flex;
  align-items: flex-start;
  gap: ${({ $loose }) => ($loose ? 7 : 4)}px;
`;

const PaneLabel = styled.label`
  padding-left: 3px;
`;

const Stack = styled.div`
  display: flex;
  flex-direction: column;
  gap: 5px;
`;

const NamePane = styled.div`
  padding: 6px 11px;
`;

const NameRow = styled.div`
  display: flex;
  gap: 8px;
  margin-bottom: 4px;
`;

const TextBox = styled.input.attrs({ type: "text" })`
  width: ${({ $focused }) => ($focused ? 240 : 187)}px;
  height: 16px;
  padding: 0 3px;
  border: 1px solid ${({ $focused }) => ($focused ? "#7ba7d6" : "#b0b2b2")};
  background: #fcfdfd;
`;

const Affixes = styled.div`
  padding-top: 6px;
  display: flex;
  flex-direction: column;
  gap: 9px;
`;

const LocationRow = styled.div`
  display: flex;
  align-items: center;
  gap: 7px;
`;

const SquareButton = styled.button`
  width: 18px;
  height: 18px;
  padding: 0;
  display: flex;
  align-items: center;
  justify-content: center;
  border: 1px solid #b4b6b6;
  background: #e8e9e9;
`;

const Footer = styled.div`
  padding: 3px 0 0 4px;
  display: flex;
  align-items: center;
  gap: 8px;
`;

const Spacer = styled.span`
  flex: 1;
`;

const PushButton = styled.button`
  width: 57px;
  height: 17px;
  padding: 0;
  border: 1px solid #b0b2b2;
  background: linear-gradient(#f0f0f0, #e4e5e5);
`;

const Resize = styled.span`
  position: absolute;
  right: 4px;
  bottom: 2px;
`;

const MouseHint = styled.div`
  position: absolute;
  left: 514px;
  top: 519px;
  filter: drop-shadow(2px 3px 3px #777);
`;

const Cursor = styled.div`
  position: absolute;
  left: 509px;
  top: 481px;
`;

export default App;
